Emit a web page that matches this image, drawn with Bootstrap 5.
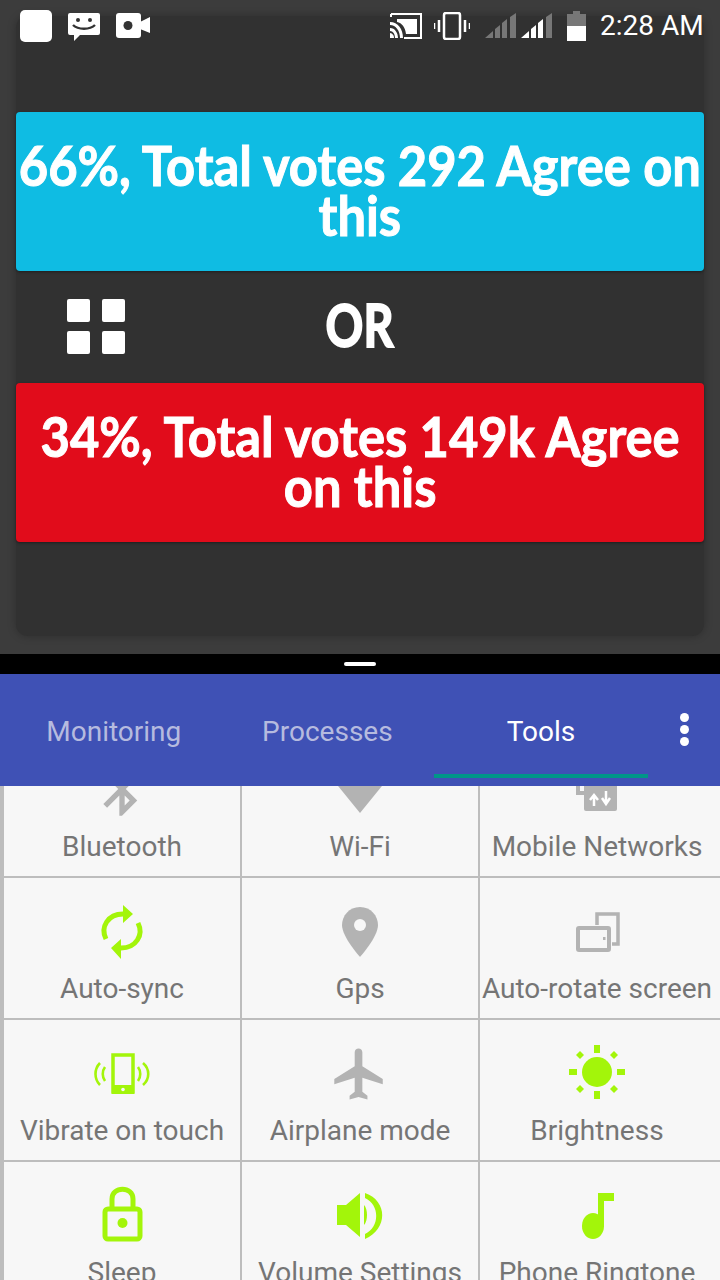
<!DOCTYPE html>
<html lang="en">
<head>
  <meta charset="UTF-8">
  <meta name="viewport" content="width=device-width, initial-scale=1.0">
  <title>Tools</title>
  <link href="https://cdn.jsdelivr.net/npm/bootstrap@5.3.3/dist/css/bootstrap.min.css" rel="stylesheet">
  <style>
    html, body { height: 1280px; overflow: hidden; }
    body { font-family: Roboto, sans-serif; background: #000; }
    .top-pane { height: 654px; background: #3c3c3c; padding: 16px 16px 18px; position: relative; }
    .status-bar { position: absolute; left: 0; right: 0; top: 0; height: 52px; padding: 0 16px 0 20px; color: #fff; font-size: 28px; z-index: 2; }
    .poll-card { height: 620px; background: #313131; border-radius: 12px; padding-top: 96px; box-shadow: 0 0 8px rgba(0,0,0,.25); }
    .vote-box { height: 159px; border-radius: 4px; color: #fff; font-family: Lato, sans-serif; font-weight: 700; font-size: 56px; line-height: 50px; -webkit-text-stroke: 1px #fff; box-shadow: 0 1px 3px rgba(0,0,0,.4); white-space: nowrap; overflow: hidden; }
    .vote-box .squeeze { width: max-content; flex: none; margin-top: -4px; transform: scaleX(.905); }
    .vote-blue { background: #0fbce3; }
    .vote-red { background: #e10c1b; }
    .or-row { height: 112px; display: grid; grid-template-columns: 1fr auto 1fr; align-items: center; }
    .or-text { color: #fff; font-family: Lato, sans-serif; font-weight: 700; font-size: 60px; -webkit-text-stroke: 2px #fff; line-height: 1; margin-top: -6px; transform: scaleX(.78); }
    .grid-btn { margin-left: 51px; display: grid; grid-template-columns: 23px 23px; gap: 9px 12px; width: 58px; margin-top: -1px; }
    .grid-btn span { height: 23px; background: #fff; border-radius: 2px; }
    .pane-divider { height: 20px; background: #000; }
    .pane-divider span { width: 32px; height: 4px; background: #fff; border-radius: 2px; }
    .tab-bar { height: 112px; background: #3f51b5; padding-left: 7px; position: relative; z-index: 1; }
    .tab-item { width: 213.6px; height: 104px; border-bottom: 4px solid transparent; color: #b6bbdf; font-size: 28px; padding-top: 16px; }
    .tab-item.on { color: #fff; border-bottom-color: #009688; }
    .tab-dots { margin-left: 32px; width: 10px; padding-top: 39px; gap: 3px; }
    .tab-dots span { width: 9px; height: 9px; border-radius: 50%; background: #fff; }
    .tool-scroll { height: 494px; overflow: hidden; background: #bdbdbd; padding-left: 4px; }
    .tool-grid { margin-top: -50px; display: grid; grid-template-columns: 238px 238px 240px; grid-auto-rows: 142px; }
    .tool-cell { background: #f7f7f7; border-bottom: 2px solid #bdbdbd; border-right: 2px solid #bdbdbd; padding-top: 21px; color: #757575; font-size: 28px; line-height: 36px; white-space: nowrap; }
    .tool-cell:nth-child(3n) { border-right: 0; padding-right: 6px; }
    .tool-cell svg { display: block; margin: 0 auto 8px; overflow: visible; }
    .ic-grey { fill: #b3b3b3; }
    .ic-green { fill: #a3f50a; }
  </style>
</head>
<body>

<div class="top-pane">
  <div class="status-bar d-flex align-items-center">
    <svg width="32" height="32" viewBox="0 0 32 32"><rect width="32" height="32" rx="5" fill="#fff"/></svg>
    <svg class="ms-3" width="32" height="30" viewBox="0 0 32 30" style="margin-top:4px"><path d="M2 0H30a2 2 0 0 1 2 2V20a2 2 0 0 1-2 2H12L6 28V22H2a2 2 0 0 1-2-2V2A2 2 0 0 1 2 0Z" fill="#fff"/><circle cx="10" cy="7" r="2" fill="#323232"/><circle cx="22" cy="7" r="2" fill="#323232"/><path d="M5 12C10 17 22 17 27 12" fill="none" stroke="#323232" stroke-width="2.4"/></svg>
    <svg class="ms-3" width="34" height="26" viewBox="0 0 34 26"><rect width="25" height="25" rx="3" fill="#fff"/><path d="M24 9L34 4V20L24 16Z" fill="#fff"/><circle cx="12" cy="12.500" r="4.500" fill="#323232"/></svg>
    <svg style="margin-left:240px" width="32" height="26" viewBox="0 0 32 26"><path d="M4 1H31V25H14" fill="none" stroke="#fff" stroke-width="2"/><path d="M1 1H4M1 4V1" stroke="#fff" stroke-width="2"/><path d="M7 6H27V21H16C15 14 12 10 7 9Z" fill="#fff"/><path d="M0 9C8 9 13 16 13 25H10C10 18 6 12 0 12ZM0 15C5 15 8 20 8 25H5C5 21 3 18 0 18ZM0 20A5 5 0 0 1 4 25H0Z" fill="#fff"/></svg>
    <svg style="margin-left:12px" width="36" height="28" viewBox="0 0 36 28"><rect x="10" y="1" width="16" height="26" rx="2" fill="none" stroke="#fff" stroke-width="2.500"/><path d="M5 8V20M0 11V17M31 8V20M36 11V17" stroke="#fff" stroke-width="2.500" fill="none"/></svg>
    <svg style="margin-left:15px" width="68" height="26" viewBox="0 0 68 26"><path d="M0 25L8 18V25ZM10 16L15 12V25H10ZM17 10L22 6V25H17ZM25 4L31 0V25H25Z" fill="#777"/><path d="M36 25L44 18V25ZM46 16L51 12V25H46ZM53 10L58 6V25H53Z" fill="#fff"/><path d="M61 4L67 0V25H61Z" fill="#777"/></svg>
    <svg style="margin-left:14px" width="19" height="30" viewBox="0 0 19 30"><path d="M6 0H13V3H19V15H0V3H6Z" fill="#777"/><rect y="15" width="19" height="15" fill="#fff"/></svg>
    <span style="margin-left:14px">2:28 AM</span>
  </div>

  <div class="poll-card">
    <div class="vote-box vote-blue d-flex align-items-center justify-content-center text-center"><div class="squeeze">66%, Total votes 292 Agree on<br>this</div></div>
    <div class="or-row">
      <div class="grid-btn"><span></span><span></span><span></span><span></span></div>
      <div class="or-text">OR</div>
      <div></div>
    </div>
    <div class="vote-box vote-red d-flex align-items-center justify-content-center text-center"><div class="squeeze">34%, Total votes 149k Agree<br>on this</div></div>
  </div>
</div>

<div class="pane-divider d-flex justify-content-center pt-2"><span></span></div>

<div class="tab-bar d-flex align-items-start">
  <div class="tab-item d-flex align-items-center justify-content-center">Monitoring</div>
  <div class="tab-item d-flex align-items-center justify-content-center">Processes</div>
  <div class="tab-item on d-flex align-items-center justify-content-center">Tools</div>
  <div class="tab-dots d-flex flex-column align-items-center"><span></span><span></span><span></span></div>
</div>

<div class="tool-scroll">
  <div class="tool-grid">
    <div class="tool-cell text-center">
      <svg width="64" height="64" viewBox="0 0 24 24"><path class="ic-grey" d="M17.710 7.710L12 2h-1v7.590L6.410 5 5 6.410 10.590 12 5 17.590 6.410 19 11 14.410V22h1l5.710-5.710-4.300-4.290 4.300-4.290zM13 5.830l1.880 1.880L13 9.590V5.830zm1.880 10.460L13 18.170v-3.760l1.880 1.880z"/></svg>
      Bluetooth
    </div>
    <div class="tool-cell text-center">
      <svg width="64" height="64" viewBox="0 0 64 64"><path class="ic-grey" d="M-7 8H71L32 56Z"/></svg>
      Wi-Fi
    </div>
    <div class="tool-cell text-center">
      <svg width="64" height="64" viewBox="0 0 64 64"><path d="M13 22H36V36H13Z" fill="none" stroke="#b3b3b3" stroke-width="4"/><rect class="ic-grey" x="19" y="27" width="33" height="27" rx="2"/><path d="M29 49V39M25 43L29 38L33 43M41 34V45M37 41L41 47L45 41" fill="none" stroke="#fff" stroke-width="2.500"/></svg>
      Mobile Networks
    </div>

    <div class="tool-cell text-center">
      <svg width="64" height="64" viewBox="0 0 64 64"><path d="M16 40C10 28 18 15 33 15M48 24C54 36 46 49 31 49" fill="none" stroke="#a3f50a" stroke-width="5"/><path class="ic-green" d="M33 6L43 15L33 24ZM31 40L21 49L31 60Z"/></svg>
      Auto-sync
    </div>
    <div class="tool-cell text-center">
      <svg width="64" height="64" viewBox="0 0 64 64"><path class="ic-grey" d="M32 8C21 8 14 17 14 26C14 38 32 58 32 58C32 58 50 38 50 26C50 17 43 8 32 8Z"/><circle cx="32" cy="26" r="6" fill="#f7f7f7"/></svg>
      Gps
    </div>
    <div class="tool-cell text-center">
      <svg width="64" height="64" viewBox="0 0 64 64"><path d="M32 26V15H53V45H47" fill="none" stroke="#b3b3b3" stroke-width="3.500"/><rect x="13" y="29" width="31" height="22" rx="1" fill="#f7f7f7" stroke="#b3b3b3" stroke-width="4"/><rect class="ic-grey" x="38" y="38" width="2.500" height="3"/></svg>
      Auto-rotate screen
    </div>

    <div class="tool-cell text-center">
      <svg width="64" height="64" viewBox="0 0 64 64"><rect x="23" y="14" width="20" height="37" fill="none" stroke="#a3f50a" stroke-width="3.500"/><rect class="ic-green" x="22" y="44" width="22" height="9"/><circle cx="33" cy="48.500" r="1.800" fill="#f7f7f7"/><path d="M10 22C4 28 4 38 10 44M15 26C12 30 12 36 15 40M53 22C60 28 60 38 53 44M48 26C51 30 51 36 48 40" fill="none" stroke="#a3f50a" stroke-width="2.600"/></svg>
      Vibrate on touch
    </div>
    <div class="tool-cell text-center">
      <svg width="64" height="64" viewBox="0 0 64 64"><path class="ic-grey" transform="translate(1.200 2.400) scale(2.550)" d="M21 16v-2l-8-5V3.500c0-.83-.67-1.500-1.500-1.500S10 2.670 10 3.500V9l-8 5v2l8-2.500V19l-2 1.500V22l3.500-1 3.500 1v-1.500L13 19v-5.500l8 2.500z"/></svg>
      Airplane mode
    </div>
    <div class="tool-cell text-center">
      <svg width="64" height="64" viewBox="0 0 64 64"><circle class="ic-green" cx="32" cy="31" r="15"/><path class="ic-green" d="M29 4H35V12H29ZM29 50H35V58H29ZM4 28H12V34H4ZM52 28H60V34H52ZM15 10L19 14L15 18L11 14ZM49 10L53 14L49 18L45 14ZM15 44L19 48L15 52L11 48ZM49 44L53 48L49 52L45 48Z"/></svg>
      Brightness
    </div>

    <div class="tool-cell text-center">
      <svg width="64" height="64" viewBox="0 0 64 64"><rect x="15" y="26" width="35" height="30" rx="3" fill="none" stroke="#a3f50a" stroke-width="5"/><path d="M22 26V16C22 3 43 3 43 16V26" fill="none" stroke="#a3f50a" stroke-width="5"/><circle class="ic-green" cx="32.500" cy="40" r="5"/></svg>
      Sleep
    </div>
    <div class="tool-cell text-center">
      <svg width="64" height="64" viewBox="0 0 64 64"><path class="ic-green" d="M9 22H18L32 10V54L18 42H9Z"/><path class="ic-green" d="M36 22C40 26 40 38 36 42ZM37 10C60 18 60 46 37 56V51C52 44 52 22 37 15Z"/></svg>
      Volume Settings
    </div>
    <div class="tool-cell text-center">
      <svg width="64" height="64" viewBox="0 0 64 64"><ellipse class="ic-green" cx="28" cy="43" rx="11" ry="13"/><path class="ic-green" d="M33 10H49V18H39V44H33Z"/></svg>
      Phone Ringtone
    </div>
  </div>
</div>

<script src="https://cdn.jsdelivr.net/npm/bootstrap@5.3.3/dist/js/bootstrap.bundle.min.js"></script>
</body>
</html>
